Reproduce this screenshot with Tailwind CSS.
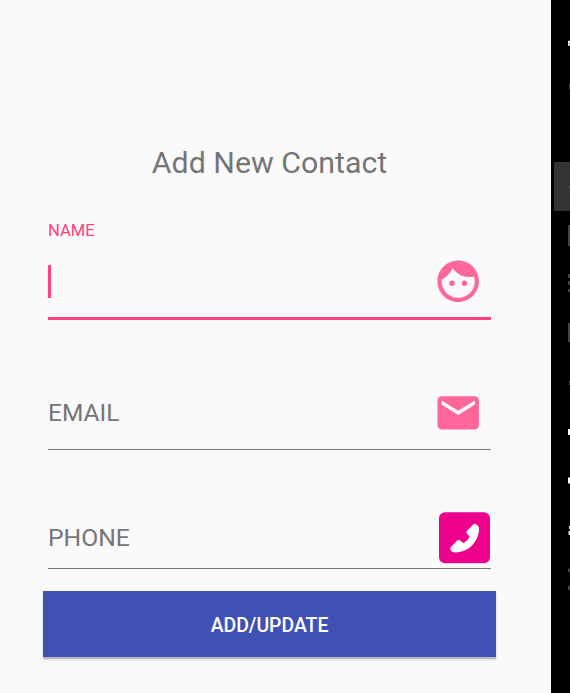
<!DOCTYPE html>
<html lang="en">
<head>
<meta charset="utf-8">
<title>Add New Contact</title>
<script src="https://cdn.jsdelivr.net/npm/@tailwindcss/browser@4"></script>
</head>
<body class="flex h-[693px] w-[570px] overflow-hidden bg-black font-['Roboto',sans-serif]">
<main class="h-full w-[551px] shrink-0 bg-[#fafafa] pl-[43px] pr-[55px] pt-[143px]">
  <h1 class="h-[40px] whitespace-nowrap text-center text-[30.3px] leading-[40px] text-[#757575]">Add New Contact</h1>
  <form class="flex flex-col">
    <div class="mx-[5px] flex h-[137px] flex-col border-b-[3px] border-[#ff4081] pt-[37px]">
      <label class="h-[20px] text-[16.6px] leading-[21px] text-[#ff4081]">NAME</label>
      <div class="mt-[16px] flex h-[50px] items-center justify-between pr-[8px]">
        <span class="h-[33px] w-[2.5px] bg-[#ff4081]"></span>
        <svg class="size-[50px]" viewBox="-.15 -.15 24.1 24.1" fill="#ff6699"><path d="M9 11.700a1.300 1.300 0 1 0 0 2.600 1.300 1.300 0 0 0 0-2.600zm6 0a1.300 1.300 0 1 0 0 2.600 1.300 1.300 0 0 0 0-2.600zM12 2C6.480 2 2 6.480 2 12s4.480 10 10 10 10-4.480 10-10S17.520 2 12 2zm0 18c-4.410 0-8-3.590-8-8 0-.29.02-.58.05-.86 2.360-1.050 4.230-2.980 5.210-5.370C11.070 8.330 14.050 10 17.420 10c.78 0 1.530-.09 2.250-.26.21.71.33 1.470.33 2.260 0 4.410-3.590 8-8 8z"/></svg>
      </div>
    </div>
    <div class="mx-[5px] flex h-[130px] items-start justify-between border-b border-[#737373] pr-[8px] pt-[68px]">
      <label class="text-[24.5px] leading-[50px] text-[#757575]">EMAIL</label>
      <svg class="size-[50px]" viewBox="-.15 0 24.1 24.1" fill="#ff6699"><path d="M20 4H4c-1.100 0-2 .9-2 2v12c0 1.100.9 2 2 2h16c1.100 0 2-.9 2-2V6c0-1.100-.9-2-2-2zm0 4l-8 5-8-5V6l8 5 8-5v2z"/></svg>
    </div>
    <div class="mx-[5px] flex h-[119px] items-start justify-between border-b border-[#737373] pt-[62px]">
      <label class="text-[24.700px] leading-[52px] text-[#757575]">PHONE</label>
      <svg class="h-[52px] w-[53px]" viewBox="54 36 159 156"><path fill="#fff" d="M54 36h159v156H54z"/><rect x="57" y="37" width="153" height="153" rx="18" fill="#ec008c"/><path fill="#fff" d="M162 71c5-1 13 6 15 12 1 11-2 24-7 33-8 16-20 28-33 34-14 7-31 9-40 6-4-3-7-8-6-13l21-22c5-2 10 0 14 6 2 2 5 2 8 0 6-4 11-9 14-15 1-3 0-5-4-7-5-4-6-9-3-13z"/></svg>
    </div>
    <button type="button" class="mt-[22px] h-[66px] bg-[#3f51b5] pt-[2px] text-[19.4px] font-medium leading-[66px] text-white shadow-[0_2px_1px_rgba(0,0,0,0.18),0_3px_3px_rgba(0,0,0,0.1)]">ADD/UPDATE</button>
  </form>
</main>
<aside class="h-full w-[19px] pl-[3px]">
  <svg class="h-[693px] w-[16px]" viewBox="554 0 16 693">
    <path fill="#333" d="M554 162h16v49h-16z"/>
    <path fill="none" stroke="#eee" stroke-width="1.6" d="M570 41.5h-1.2v3.5h1.2"/>
    <path fill="#444" d="M570 82q-2 4 0 9zM569 186h1v2h-1zM568 225h2v21h-2zM568 274h2v4h-2zM568 281h2v4h-2zM568 289h2v3h-2zM568 323h2v19h-2zM569 381h1v4h-1zM568 568l2 1v2l-2 2zM568 585l2 1v4h-2z"/>
    <path fill="#fff" d="M568 429h2v6h-2zM568 477.500h2v6h-2z"/>
    <path fill="#ddd" d="M569 526h1v3h-1zM568.500 531h1.500v4h-1.500z"/>
  </svg>
</aside>
</body>
</html>
